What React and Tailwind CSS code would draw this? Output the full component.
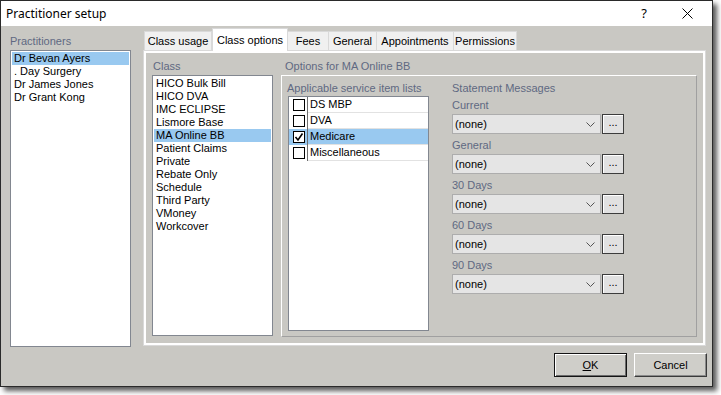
import React from 'react';

const practitioners = ['Dr Bevan Ayers', '. Day Surgery', 'Dr James Jones', 'Dr Grant Kong'];
const classes = [
  'HICO Bulk Bill', 'HICO DVA', 'IMC ECLIPSE', 'Lismore Base', 'MA Online BB', 'Patient Claims',
  'Private', 'Rebate Only', 'Schedule', 'Third Party', 'VMoney', 'Workcover',
];
const serviceLists = [
  { name: 'DS MBP', checked: false },
  { name: 'DVA', checked: false },
  { name: 'Medicare', checked: true, selected: true },
  { name: 'Miscellaneous', checked: false },
];
const tabs = ['Class usage', 'Class options', 'Fees', 'General', 'Appointments', 'Permissions'];
const tabWidths = {
  'Class usage': 'w-[68px]',
  'Class options': 'w-[76px]',
  'Fees': 'w-[42px]',
  'General': 'w-[49px]',
  'Appointments': 'w-[78px]',
  'Permissions': 'w-[64px]',
};
const messages = ['Current', 'General', '30 Days', '60 Days', '90 Days'];

function Label({ children, className = '' }) {
  return <div className={`h-[13px] leading-[13px] text-[#5f6982] ${className}`}>{children}</div>;
}

function ListBox({ items, selected, className }) {
  return (
    <div className={`bg-white border border-[#828790] p-[1px] ${className}`}>
      {items.map((item) => (
        <div
          key={item}
          className={`h-[13px] leading-[13px] pl-[2px] text-black ${item === selected ? 'bg-[#99c9f0]' : ''}`}
        >
          {item}
        </div>
      ))}
    </div>
  );
}

function Select() {
  return (
    <div className="flex items-center">
      <div className="w-[149px] h-[20px] bg-[#e5e5e5] border border-[#adadad] flex items-center justify-between pl-[2px] pr-[5px]">
        <span className="text-black">(none)</span>
        <svg width="9" height="5" viewBox="0 0 9 5">
          <path d="M0.5 0.5 L4.5 4.5 L8.5 0.5" fill="none" stroke="#555" strokeWidth="1" />
        </svg>
      </div>
      <div className="ml-[1px] w-[22px] h-[20px] bg-[#e1e1e1] border border-[#3c3c3c] shadow-[inset_1px_1px_0_#ffffff] flex items-center justify-center text-black leading-none pb-[3px]">
        ...
      </div>
    </div>
  );
}

export default function App() {
  return (
    <div className="w-[721px] h-[395px] bg-white text-[11px]" style={{ fontFamily: '"Liberation Sans", Arial, sans-serif' }}>
      <div className="w-[713px] h-[387px] border border-[#2a2a2a] bg-[#c9c8c3] flex flex-col shadow-[4px_4px_5px_rgba(0,0,0,0.65)]">
        {/* Title bar */}
        <div className="h-[25px] bg-white flex items-center justify-between pl-[5px] shrink-0">
          <span className="text-[12px] text-black" style={{ fontFamily: '"Noto Sans", sans-serif' }}>
            Practitioner setup
          </span>
          <div className="flex items-center h-full">
            <span className="text-[13px] text-black mr-[35px]" style={{ fontFamily: '"Noto Sans", sans-serif' }}>?</span>
            <svg width="11" height="11" viewBox="0 0 11 11" className="mr-[19px]">
              <path d="M0.5 0.5 L10.5 10.5 M10.5 0.5 L0.5 10.5" stroke="#000" strokeWidth="1" />
            </svg>
          </div>
        </div>

        {/* Main */}
        <div className="h-[321px] flex pl-[9px] pt-[2px] shrink-0">
          <div className="w-[121px] pt-[7px]">
            <Label>Practitioners</Label>
            <ListBox items={practitioners} selected="Dr Bevan Ayers" className="mt-[2px] h-[297px]" />
          </div>

          <div className="ml-[12px] w-[563px]">
            {/* Tab strip */}
            <div className="h-[22px] flex items-end pl-[1px] relative z-10">
              {tabs.map((t) =>
                t === 'Class options' ? (
                  <div
                    key={t}
                    className={`${tabWidths[t]} h-[23px] -mb-[1px] bg-white border border-b-0 border-[#d9d9d9] flex items-center justify-center text-black`}
                  >
                    {t}
                  </div>
                ) : (
                  <div
                    key={t}
                    className={`${tabWidths[t]} h-[19px] bg-[#f0f0f0] border border-b-0 border-[#d9d9d9] -ml-[1px] first:ml-0 flex items-center justify-center text-black`}
                  >
                    {t}
                  </div>
                )
              )}
            </div>

            {/* Tab panel */}
            <div className="h-[296px] border border-[#d9d9d9] bg-white p-[2px]">
              <div className="h-full bg-[#c9c8c3] flex pl-[6px] pt-[7px]">
                <div className="w-[121px]">
                  <Label className="pl-[1px]">Class</Label>
                  <ListBox items={classes} selected="MA Online BB" className="mt-[2px] h-[261px]" />
                </div>

                <div className="ml-[8px]">
                  <Label className="pl-[4px]">Options for MA Online BB</Label>
                  <div className="mt-[2px] w-[416px] h-[262px] border border-t-white border-l-white border-r-[#a0a0a0] border-b-[#a0a0a0] flex pl-[6px] pt-[6px]">
                    <div>
                      <Label className="-ml-[1px]">Applicable service item lists</Label>
                      <div className="mt-[1px] w-[141px] h-[235px] bg-white border border-[#828790]">
                        {serviceLists.map((s) => (
                          <div key={s.name} className={`h-[16px] flex ${s.selected ? 'bg-[#99c9f0]' : ''}`}>
                            <div className="w-[19px] border-r border-[#6e6e6e] flex items-center pl-[4px]">
                              <div className="w-[12px] h-[12px] border border-black bg-white flex items-center justify-center">
                                {s.checked && (
                                  <svg width="10" height="10" viewBox="0 0 10 10">
                                    <path d="M1.5 5 L4 8 L8.5 1.5" fill="none" stroke="#000" strokeWidth="1.6" />
                                  </svg>
                                )}
                              </div>
                            </div>
                            <div className="flex-1 border-b border-[#e2e2e2] pl-[2px] leading-[15px] text-black">
                              {s.name}
                            </div>
                          </div>
                        ))}
                      </div>
                    </div>

                    <div className="ml-[23px]">
                      <Label>Statement Messages</Label>
                      <div className="mt-[4px]">
                        {messages.map((m) => (
                          <div key={m} className="mb-[5px]">
                            <Label>{m}</Label>
                            <div className="mt-[2px]">
                              <Select />
                            </div>
                          </div>
                        ))}
                      </div>
                    </div>
                  </div>
                </div>
              </div>
            </div>
          </div>
        </div>

        {/* Buttons */}
        <div className="flex justify-end pr-[5px] mt-[6px] gap-[7px]">
          <div className="w-[73px] h-[24px] border border-[#141414] bg-[#cfcec9] shadow-[inset_1px_1px_0_#ffffff,inset_-1px_-1px_0_#6a6a6a] flex items-center justify-center text-black">
            <span><span className="underline">O</span>K</span>
          </div>
          <div className="w-[73px] h-[24px] border border-t-white border-l-white border-r-[#3a3a3a] border-b-[#3a3a3a] bg-[#cfcec9] shadow-[inset_-1px_-1px_0_#8a8a8a] flex items-center justify-center text-black">
            Cancel
          </div>
        </div>
      </div>
    </div>
  );
}
